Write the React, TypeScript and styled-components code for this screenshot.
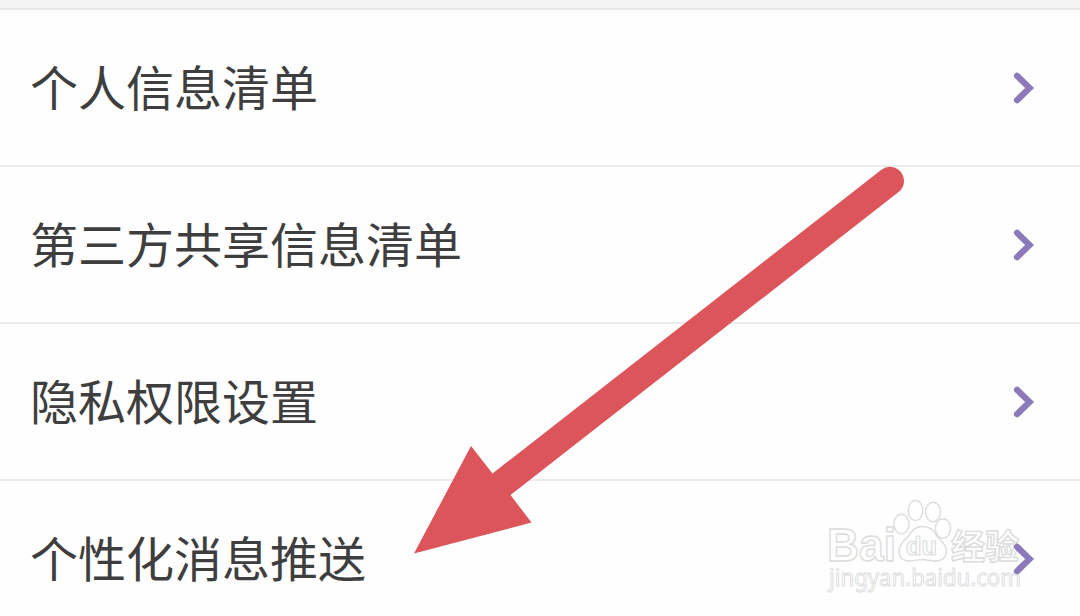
import React from 'react';
import styled, { createGlobalStyle } from 'styled-components';

const GlobalStyle = createGlobalStyle`
  body {
    margin: 0;
    background: #fefefe;
    overflow: hidden;
  }
`;

const Page = styled.main`
  position: relative;
  height: 616px;
  overflow: hidden;
  font-family: 'Noto Sans CJK SC', sans-serif;
`;

const TopStrip = styled.header`
  box-sizing: border-box;
  height: 10px;
  background: #f3f3f3;
  border-bottom: 2px solid #e9e9e9;
`;

const List = styled.ul`
  margin: 0;
  padding: 0;
  list-style: none;
`;

const Row = styled.li`
  display: flex;
  align-items: center;
  justify-content: space-between;
  box-sizing: border-box;
  height: 157px;
  padding: 0 45px 0 30px;
  border-bottom: 2px solid #ebebeb;
`;

const Label = styled.span`
  padding-bottom: 5px;
  color: #3e3e3e;
  font-size: 48px;
  line-height: 72px;
`;

const Chevron = styled.svg`
  position: relative;
  z-index: 1;
  width: 24px;
  height: 34px;
`;

const Overlay = styled.svg`
  position: absolute;
  top: 0;
  left: 0;
  pointer-events: none;
`;

const Watermark = styled.svg`
  position: absolute;
  top: 490px;
  left: 820px;
  pointer-events: none;
`;

interface MenuItemProps {
  text: string;
}

const MenuItem: React.FC<MenuItemProps> = ({ text }) => {
  return (
    <Row>
      <Label>{text}</Label>
      <Chevron viewBox="0 0 24 34" fill="none">
        <path
          d="M6 4.8 L18.6 17 L6 29.2"
          stroke="#8b79b9"
          strokeWidth="6.2"
          strokeLinecap="round"
        />
      </Chevron>
    </Row>
  );
};

const Arrow: React.FC = () => {
  return (
    <Overlay width="1080" height="616" fill="#db555b">
      <path d="M414 553.5 L471 446 L492.5 473.5 L881.4 169.8 A14 14 0 0 1 898.6 192 L510.5 495 L531.5 522.5 Z" />
    </Overlay>
  );
};

const BaiduMark: React.FC = () => {
  return (
    <Watermark
      width="230"
      height="126"
      fill="#ffffff"
      stroke="#dcdcdc"
      strokeWidth="1.4"
      fontFamily="'Liberation Sans', sans-serif"
    >
      <text
        x="7"
        y="70.5"
        fontSize="46"
        fontWeight="700"
        textLength="69"
        lengthAdjust="spacingAndGlyphs"
      >
        Bai
      </text>
      <ellipse cx="81.5" cy="34" rx="7.6" ry="9.7" />
      <ellipse cx="95.5" cy="20.5" rx="7.3" ry="10" />
      <ellipse cx="113" cy="22" rx="7.5" ry="9.7" />
      <ellipse cx="123" cy="38.5" rx="7.6" ry="9.7" />
      <path d="M102.5 36.5 C96 36.5 92.5 40 90 44 C86 50 79 53 79 61 C79 68 84 71.5 90 71 C96 70.5 98 69.5 103 69.5 C108 69.5 110 71.5 116 71 C123 70.5 126.5 67 126.5 61 C126.5 54 120 50.5 116 45 C113 40 110 36.5 102.5 36.5 Z" />
      <text
        x="86"
        y="65"
        fontSize="25"
        fontWeight="700"
        strokeWidth="1.1"
        textLength="31"
        lengthAdjust="spacingAndGlyphs"
      >
        du
      </text>
      <text
        x="131"
        y="68.5"
        fontSize="34"
        fontWeight="700"
        fontFamily="'Noto Sans CJK SC', sans-serif"
        textLength="68"
      >
        经验
      </text>
      <text
        x="9"
        y="96"
        fontSize="23"
        strokeWidth="0.9"
        fontFamily="'Noto Sans', sans-serif"
        textLength="192"
        lengthAdjust="spacingAndGlyphs"
      >
        jingyan.baidu.com
      </text>
    </Watermark>
  );
};

const items = [
  '个人信息清单',
  '第三方共享信息清单',
  '隐私权限设置',
  '个性化消息推送',
];

const App: React.FC = () => {
  return (
    <Page>
      <GlobalStyle />
      <TopStrip />
      <List>
        {items.map((item) => (
          <MenuItem key={item} text={item} />
        ))}
      </List>
      <BaiduMark />
      <Arrow />
    </Page>
  );
};

export default App;
